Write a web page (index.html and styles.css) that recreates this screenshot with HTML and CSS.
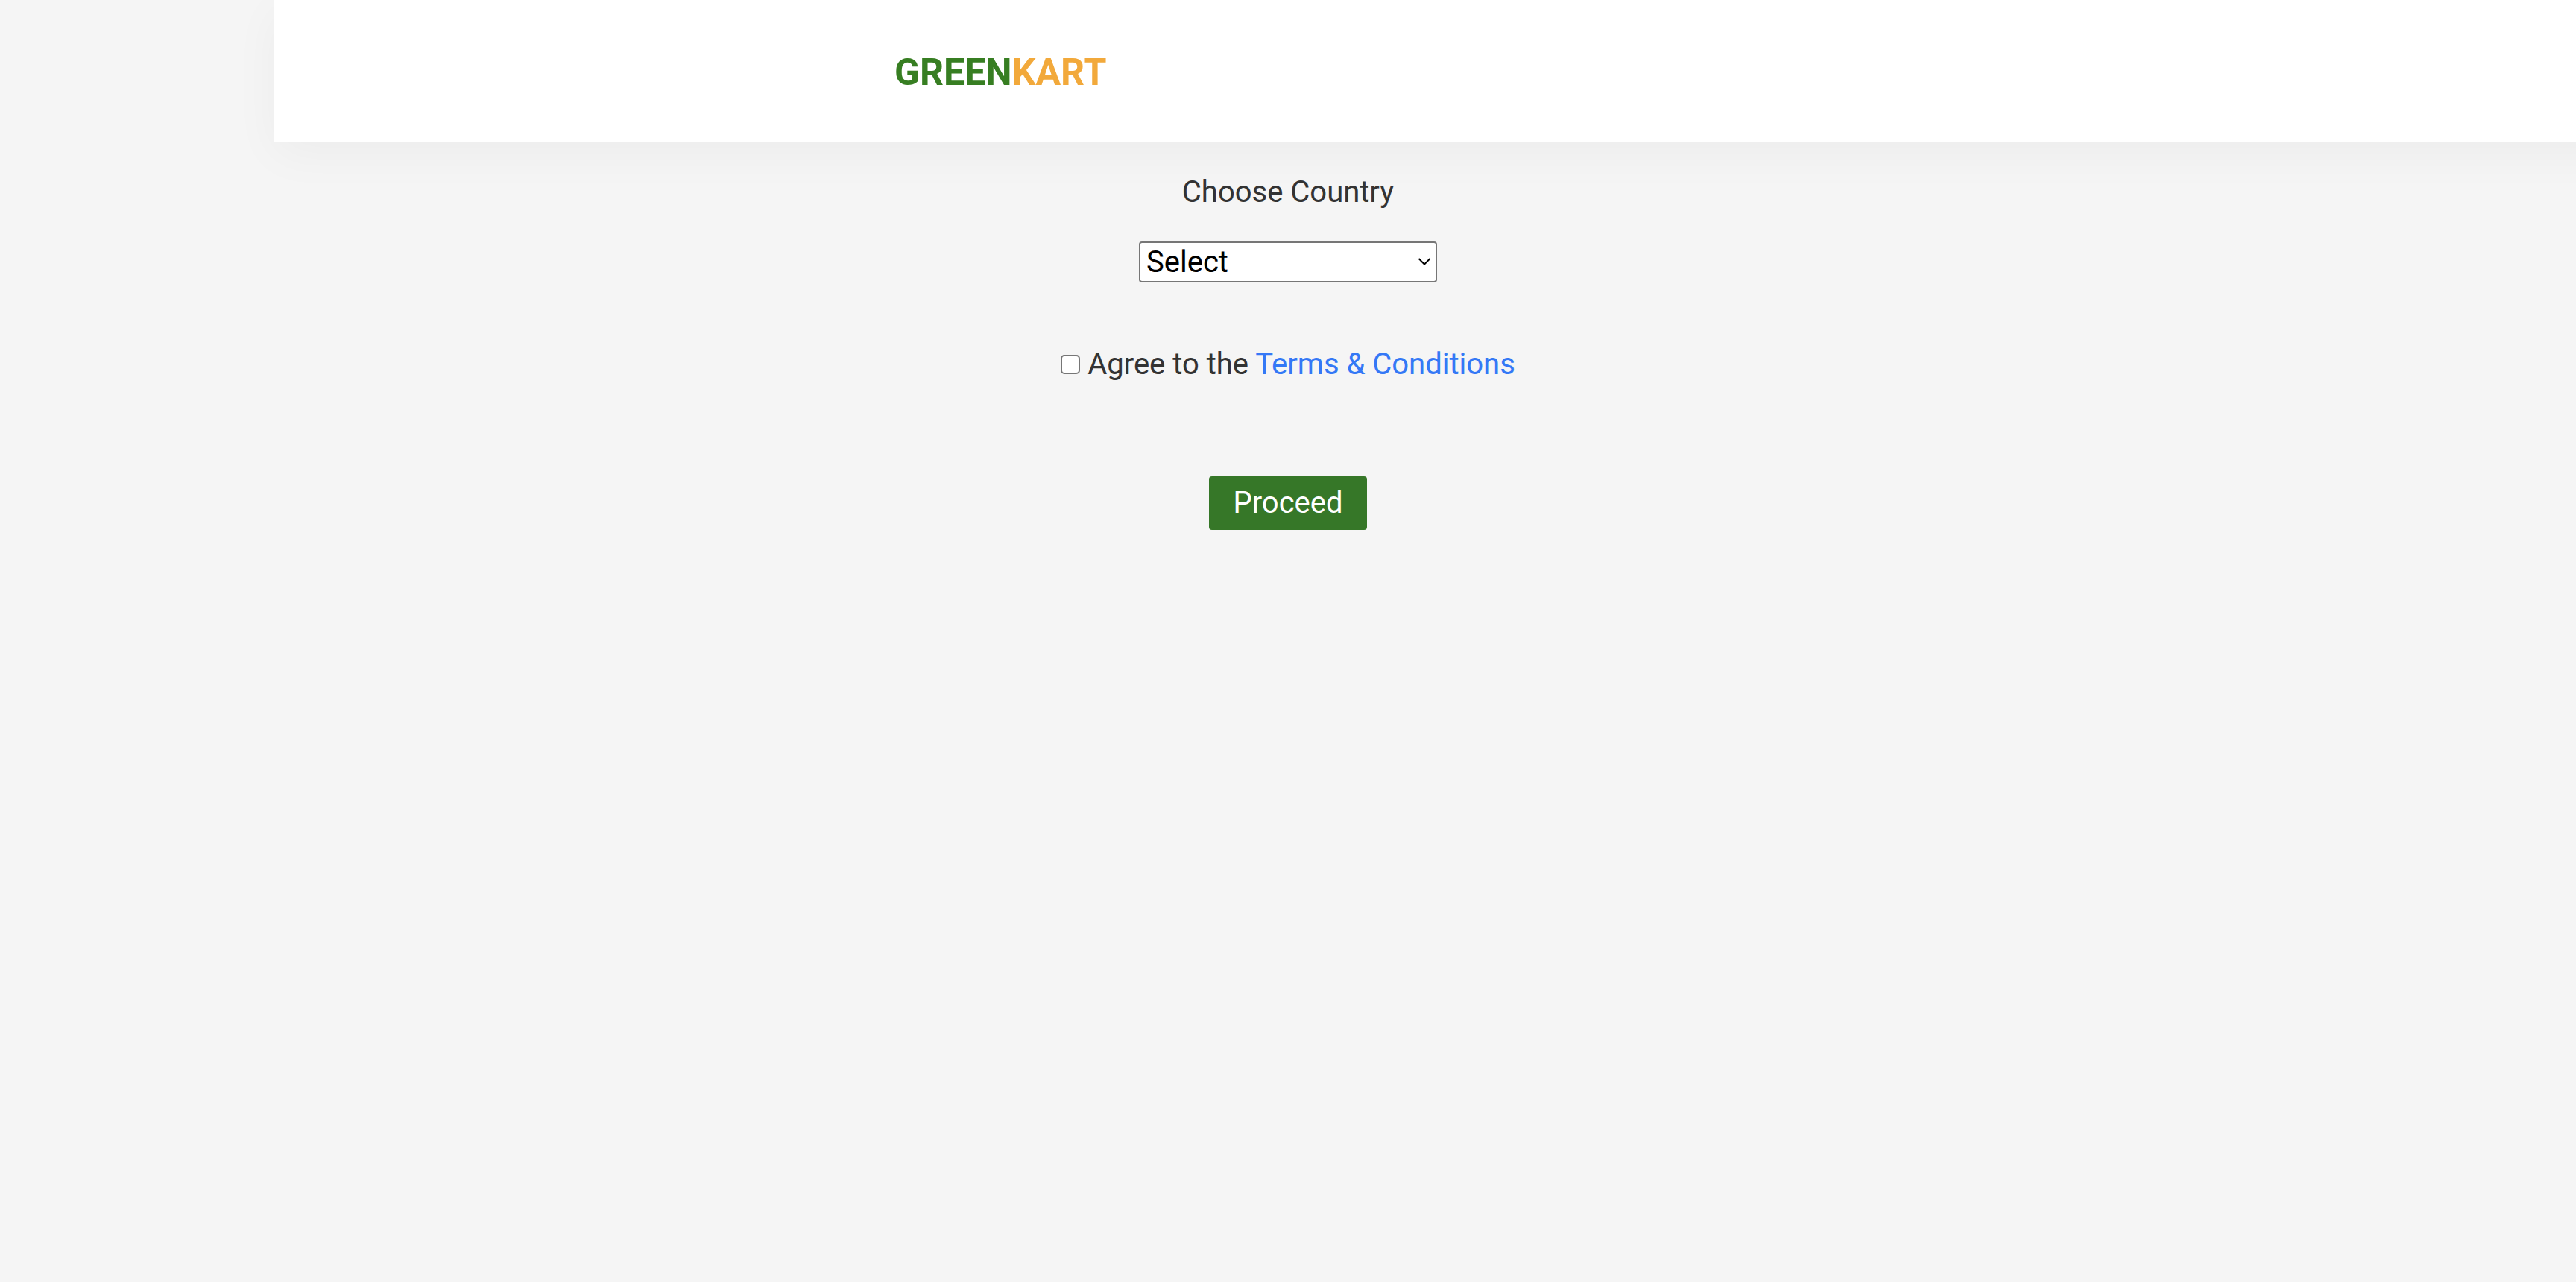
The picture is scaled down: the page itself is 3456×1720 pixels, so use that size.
FILE: index.html
```html
<!DOCTYPE html>
<html lang="en">
<head>
  <meta charset="utf-8">
  <meta name="viewport" content="width=device-width, initial-scale=1">
  <title>GreenKart</title>
  <link rel="stylesheet" href="styles.css">
</head>
<body>
  <header class="header">
    <div class="brand"><span class="brand-green">GREEN</span><span class="brand-orange">KART</span></div>
  </header>
  <main class="checkout">
    <label class="country-label" for="country">Choose Country</label>
    <div class="select-wrap">
      <select class="country-select" id="country">
        <option>Select</option>
      </select>
      <svg class="select-arrow" viewBox="0 0 18 12" aria-hidden="true"><path d="M1.5 2 9 9.5 16.5 2"/></svg>
    </div>
    <div class="agreement">
      <input class="agree-box" type="checkbox" id="agree">
      <span><label for="agree">Agree to the</label> <a class="terms-link" href="#">Terms &amp; Conditions</a></span>
    </div>
    <button class="proceed" type="button">Proceed</button>
  </main>
</body>
</html>
```

FILE: styles.css
```css
* {
  box-sizing: border-box;
}

body {
  margin: 0;
  min-height: 100vh;
  background: #f5f5f5;
  color: #333;
  font-family: Roboto, "Liberation Sans", sans-serif;
  font-size: 40px;
  line-height: 48px;
  overflow-x: hidden;
}

.header {
  margin-left: 368px;
  margin-right: -100px;
  padding: 67px 0 63px 832px;
  background: #fff;
  box-shadow: 0 16px 60px rgba(0, 0, 0, 0.04);
}

.brand {
  font-size: 50px;
  line-height: 60px;
  font-weight: 700;
}

.brand-green {
  color: #377e22;
}

.brand-orange {
  color: #f2a93b;
}

.checkout {
  display: flex;
  flex-direction: column;
  align-items: center;
  padding-top: 44px;
}

.select-wrap {
  position: relative;
  margin-top: 42px;
}

.country-select {
  display: block;
  appearance: none;
  width: 400px;
  height: 55px;
  margin: 0;
  padding: 0 48px 0 8px;
  border: 2px solid #767676;
  border-radius: 4px;
  background: #fff;
  color: #000;
  font: inherit;
}

.select-arrow {
  position: absolute;
  top: 21px;
  right: 8px;
  width: 18px;
  height: 12px;
  fill: none;
  stroke: #000;
  stroke-width: 2;
  pointer-events: none;
}

.agreement {
  display: flex;
  align-items: center;
  gap: 10px;
  margin-top: 86px;
}

.agree-box {
  appearance: none;
  width: 26px;
  height: 26px;
  margin: 0;
  border: 2px solid #767676;
  border-radius: 5px;
  background: #fff;
}

.agree-box:checked {
  background: #377e22;
}

.terms-link {
  color: #3478f6;
  text-decoration: none;
}

.proceed {
  margin-top: 126px;
  padding: 12px 32px;
  border: 0;
  border-radius: 4px;
  background: #367728;
  color: #fff;
  font: inherit;
  cursor: pointer;
}
```
